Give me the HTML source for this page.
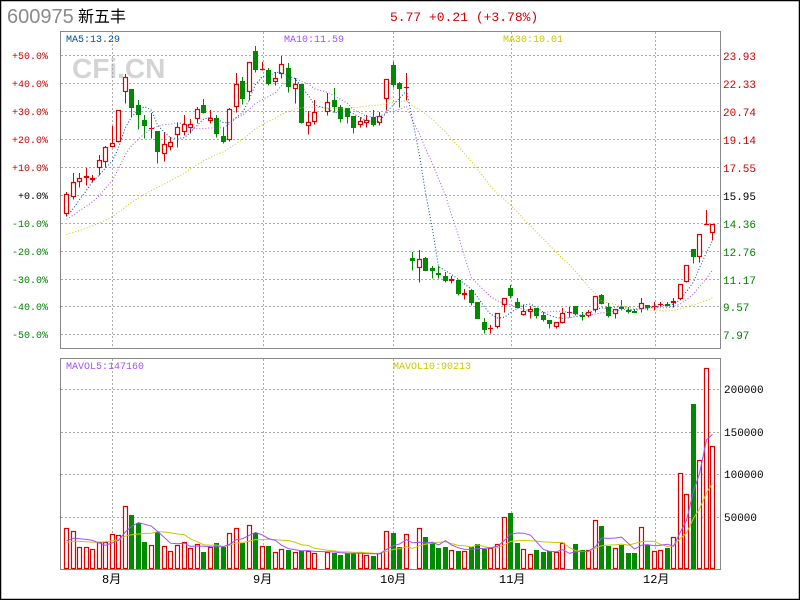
<!DOCTYPE html>
<html><head><meta charset="utf-8">
<style>
html,body{margin:0;padding:0;background:#fff;}
svg{display:block;}
text{font-family:"Liberation Mono","Noto Sans CJK SC",monospace;}
</style></head>
<body>
<svg id="s" width="800" height="600" xmlns="http://www.w3.org/2000/svg">
<rect x="0.5" y="0.5" width="799" height="599" fill="#fff" stroke="#000" stroke-width="1.5"/>
<text x="7" y="23" font-family="Liberation Sans,sans-serif" style="font-family:'Liberation Sans',sans-serif" font-size="20" fill="#8a8a8a">600975</text>
<text x="78" y="22" style="font-family:'Liberation Sans','Noto Sans CJK SC',sans-serif" font-size="16" fill="#000">新五丰</text>
<text x="390" y="21" font-size="13" fill="#d00000">5.77 +0.21 (+3.78%)</text>
<text x="72" y="78" style="font-family:'Liberation Sans',sans-serif" font-size="28" font-weight="bold" fill="#d4d4d4">CFi.CN</text>
<g id="g"></g>
</svg>
<script>
var NS="http://www.w3.org/2000/svg",g=document.getElementById('g');
function el(t,a,txt){var e=document.createElementNS(NS,t);for(var k in a)e.setAttribute(k,a[k]);if(txt!=null)e.textContent=txt;g.appendChild(e);return e;}
// frames
el('rect',{x:60.5,y:31.5,width:660,height:317,fill:'none',stroke:'#888'});
el('rect',{x:60.5,y:358.5,width:660,height:211,fill:'none',stroke:'#888'});
var hy=[55,83,111,139,167,195,223,251,279,306,334];
hy.forEach(function(y){el('line',{x1:61,x2:720,y1:y+.5,y2:y+.5,stroke:'#aaa','stroke-dasharray':'2 2'});});
[389,432,474,517].forEach(function(y){el('line',{x1:61,x2:720,y1:y+.5,y2:y+.5,stroke:'#aaa','stroke-dasharray':'2 2'});});
[112,263,393,511,655].forEach(function(x){
 el('line',{x1:x+.5,x2:x+.5,y1:32,y2:348,stroke:'#aaa','stroke-dasharray':'2 2'});
 el('line',{x1:x+.5,x2:x+.5,y1:359,y2:569,stroke:'#aaa','stroke-dasharray':'2 2'});
});
var lp=['+50.0%','+40.0%','+30.0%','+20.0%','+10.0%','+0.0%','-10.0%','-20.0%','-30.0%','-40.0%','-50.0%'];
var rp=['23.93','22.33','20.74','19.14','17.55','15.95','14.36','12.76','11.17','9.57','7.97'];
hy.forEach(function(y,i){var c=i<5?'#d00000':(i==5?'#000':'#008000');
 el('text',{x:i==5?18:12,y:y+4,'font-size':10,fill:c},lp[i]);
 el('text',{x:723,y:y+5,'font-size':11,fill:c},rp[i]);});
[['200000',389],['150000',432],['100000',474],['50000',517]].forEach(function(a){el('text',{x:724,y:a[1]+4,'font-size':11,fill:'#000'},a[0]);});
[['8月',102],['9月',253],['10月',380],['11月',499],['12月',643]].forEach(function(a){el('text',{x:a[1],y:583,'font-size':12,fill:'#000'},a[0]);});
el('text',{x:66,y:42,'font-size':10,fill:'#004e98'},'MA5:13.29');
el('text',{x:284,y:42,'font-size':10,fill:'#a050ff'},'MA10:11.59');
el('text',{x:503,y:42,'font-size':10,fill:'#c8c800'},'MA30:10.01');
el('text',{x:66,y:369,'font-size':10,fill:'#a050ff'},'MAVOL5:147160');
el('text',{x:393,y:369,'font-size':10,fill:'#c8c800'},'MAVOL10:90213');
var D=[[1,194,214,192,216],[1,182,197,173,199],[1,178,182,173,187],[1,176,178,168,185],[1,178,180,175,182],[1,160,168,155,175],[1,147,162,146,167],[1,143,147,126,147],[1,110,142,110,142],[1,77,92,74,103],
[0,89,107,89,117],[0,105,114,100,129],[0,120,125,115,138],[1,128,129,113,138],[0,131,151,131,163],[1,144,154,132,161],[1,142,147,137,150],[1,127,135,122,147],[1,124,132,115,135],[1,124,128,119,133],
[1,109,119,107,123],[0,105,112,99,113],[1,118,121,110,123],[0,118,133,115,137],[0,136,141,127,143],[1,109,140,108,141],[1,84,107,73,112],[0,81,98,77,104],[1,62,92,62,100],[0,51,69,46,72],
[1,69,70,62,70],[0,70,83,68,85],[1,78,82,72,85],[1,64,74,56,78],[0,68,86,63,92],[1,84,89,78,103],[0,84,122,84,123],[1,122,126,111,134],[1,112,122,100,124],null,
[1,102,112,93,115],[0,100,106,88,112],[0,107,118,105,122],[0,108,116,108,123],[0,116,127,116,133],[1,121,125,117,127],[1,120,123,115,127],[0,117,124,110,126],[1,116,123,112,125],[1,79,99,79,110],
[0,65,84,62,87],[0,83,88,82,107],[1,87,88,73,100],[0,258,260,252,270],[1,259,268,250,282],[0,258,270,257,270],[0,268,270,266,278],[0,273,274,266,278],[0,276,280,272,282],[1,279,281,276,283],
[0,280,293,280,295],[1,293,295,289,299],[0,290,302,290,305],[0,302,318,302,318],[0,322,329,318,333],[1,328,329,325,333],[1,313,327,313,328],[1,298,305,298,312],[0,288,295,285,298],[0,302,307,298,308],
[1,311,315,305,315],[1,309,312,306,318],[0,308,315,308,318],[0,315,319,312,321],[0,320,323,320,328],[1,322,327,322,328],[1,313,323,308,323],[1,312,313,307,317],[0,306,313,306,315],[0,315,315,312,320],
[1,312,316,310,317],[1,296,310,296,312],[0,295,303,294,304],[0,307,315,303,317],[1,309,314,309,318],[0,307,308,300,310],[0,310,311,307,313],[0,311,311,309,312],[1,303,309,298,312],[0,305,307,305,310],
[1,306,306,302,310],[1,304,305,302,306],[0,304,304,302,306],[1,301,303,298,307],[1,284,299,284,299],[1,265,282,265,282],[0,249,256,249,263],[1,234,257,234,262],[1,224,224,210,224],[1,224,233,224,240]];
var V=[528,531,547,547,549,542,542,534,535,506,515,523,542,545,532,546,551,545,542,548,544,552,547,543,547,533,528,543,525,533,546,546,552,549,550,552,551,551,553,0,552,553,555,553,553,552,555,556,553,531,533,547,534,0,528,537,543,548,547,550,551,551,547,544,549,548,544,517,513,543,549,554,550,552,551,552,543,0,544,550,550,520,526,546,548,545,553,553,527,545,551,550,548,537,473,494,404,460,368,446];
var RED='#dd0000',GRN='#008a00';
var closes=[],xs=[],vols=[],vx=[];
for(var i=0;i<20;i++)closes.push(242);for(i=0;i<9;i++)closes.push(222);
var pre=closes.length;
var vpre=[];for(i=0;i<10;i++)vpre.push(25);
var vh=vpre.slice();
for(i=0;i<100;i++){var d=D[i];var x=64+6.53*i;var cx=Math.round(x+2)+.5;var bx=Math.round(x);
 if(d){var c=d[0]?RED:GRN;
  el('line',{x1:cx,x2:cx,y1:d[3],y2:d[4]+0.5,stroke:c});
  var h=Math.max(d[2]-d[1],1);
  if(d[0])el('rect',{x:bx+.5,y:d[1]+.5,width:4,height:Math.max(h-1,0.01),fill:'#fff',stroke:c,'stroke-width':1.2});
  else el('rect',{x:bx,y:d[1],width:5,height:h+1,fill:c});
  closes.push(d[0]?d[1]:d[2]);xs.push(cx);
  if(V[i]){var vt=V[i];
   if(d[0])el('rect',{x:bx+.5,y:vt+.5,width:4,height:569-vt-1,fill:'#fff',stroke:c,'stroke-width':1.2});
   else el('rect',{x:bx,y:vt,width:5,height:569-vt,fill:c});}
  vh.push(V[i]?569-V[i]:0);vx.push(cx);
 }}
function ma(arr,n,start,xa,col,dash){var pts=[];for(var j=start;j<arr.length;j++){var s=0;for(var k=j-n+1;k<=j;k++)s+=arr[k];pts.push(xa[j-start]+','+(s/n).toFixed(1));}
 var a={points:pts.join(' '),fill:'none',stroke:col,'stroke-width':1};if(dash)a['stroke-dasharray']=dash;el('polyline',a);}
ma(closes,30,pre,xs,'#c8c800','1 2');
ma(closes,10,pre,xs,'#a050ff','1 2');
ma(closes,5,pre,xs,'#004e98','1 2');
var vy=vh.map(function(h){return 569-h;});
ma(vy,10,10,vx,'#c8c800');
ma(vy,5,10,vx,'#a050ff');
</script>
</body></html>
